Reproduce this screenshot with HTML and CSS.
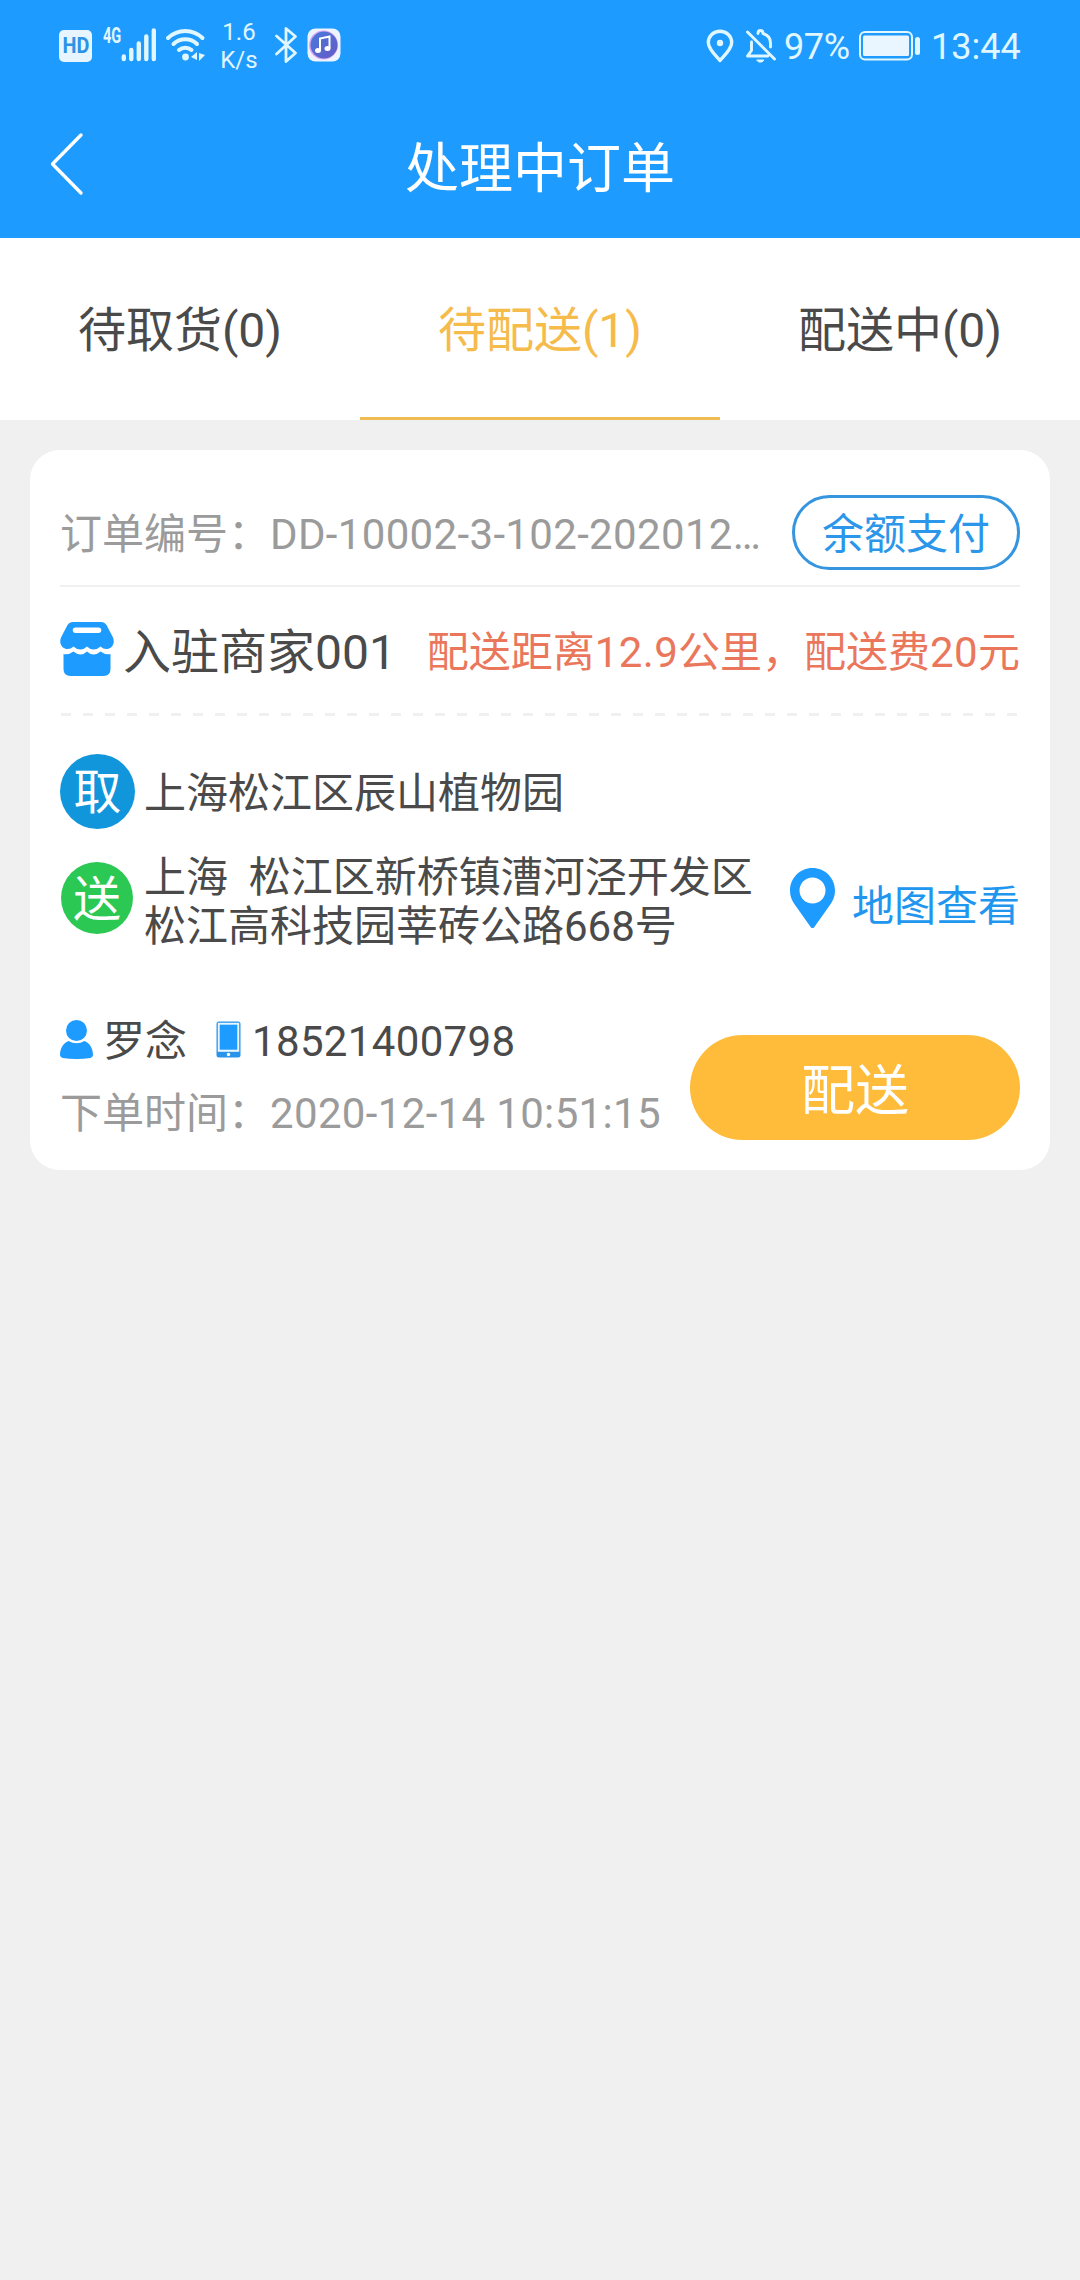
FILE: index.html
```html
<!DOCTYPE html>
<html lang="zh-CN">
<head>
<meta charset="utf-8">
<title>处理中订单</title>
<link rel="stylesheet" href="styles.css">
</head>
<body>
<header class="header">
  <div class="status">
    <span class="hd"><b>HD</b></span>
    <span class="net">4G</span>
    <svg class="signal" width="36" height="34" viewBox="0 0 36 34" stroke="currentColor" stroke-width="4.4" stroke-linecap="round"><path d="M2.8 28.5v2.5M10.3 22v9M17.8 15.500v15.500M25.300 8.500v22.500M32.800 2.500v28.500"/></svg>
    <svg class="wifi" width="42" height="36" viewBox="0 0 42 36" fill="none" stroke="currentColor" stroke-width="4" stroke-linecap="round"><path d="M3 11a24.500 24.500 0 0 1 34.500 0M8.500 17a17 17 0 0 1 23.500 0M14 23a9.500 9.500 0 0 1 12.500 0"/><circle cx="20.500" cy="30" r="3.400" fill="currentColor" stroke="none"/><path d="M26 30l6-5v8zM34 26v8l6-6z" fill="currentColor" stroke="none"/></svg>
    <span class="speed"><span>1.6</span><span>K/s</span></span>
    <svg class="bluetooth" width="24" height="38" viewBox="0 0 24 38" fill="none" stroke="currentColor" stroke-width="2.800" stroke-linejoin="round" stroke-linecap="round"><path d="M2.500 10l19 17L12 35.500V2.500l9.500 8L2.500 28"/></svg>
    <svg class="music" width="34" height="34" viewBox="0 0 34 34"><defs><linearGradient id="disc" x1="0" y1="0" x2="1" y2="1"><stop offset="0" stop-color="#477bdf"/><stop offset="1" stop-color="#6659c4"/></linearGradient></defs><rect x=".5" y=".5" width="33" height="33" rx="8" fill="#eef4ff"/><circle cx="16.500" cy="17" r="14.500" fill="#d9a9ef"/><circle cx="17" cy="17" r="13.500" fill="url(#disc)"/><path d="M13 22V10.500l9.500-2V20" fill="none" stroke="#fff" stroke-width="2"/><ellipse cx="11" cy="22.500" rx="3" ry="2.500" fill="#fff"/><ellipse cx="20.500" cy="20.500" rx="3" ry="2.500" fill="#fff"/></svg>
    <span class="spacer"></span>
    <svg class="gps" width="28" height="34" viewBox="0 0 28 34"><path d="M14 2.200C7.500 2.200 2.300 7 2.300 13.500 2.300 20 10 27 14 31.500 18 27 25.700 20 25.700 13.500 25.700 7 20.500 2.200 14 2.200z" fill="none" stroke="currentColor" stroke-width="3.400" stroke-linejoin="round"/><circle cx="14" cy="14" r="3.200" fill="currentColor"/></svg>
    <svg class="mute" width="32" height="36" viewBox="0 0 32 36" fill="none" stroke="currentColor" stroke-width="2.900" stroke-linecap="round" stroke-linejoin="round"><path d="M2.500 4l27 27M6.500 14v8.500L2.500 28H23M13 5.500C13 1.500 18 1.500 18 5.500 23 7 25.500 10.500 25.500 15v4"/><path d="M12 32h7l-2 2h-3z" fill="currentColor" stroke-width="1"/></svg>
    <span class="percent">97%</span>
    <svg class="battery" width="62" height="30" viewBox="0 0 62 30"><rect x="1" y="1" width="52" height="27.500" rx="5" fill="none" stroke="currentColor" stroke-width="2"/><rect x="4" y="4.500" width="46" height="20.500" rx="1.500" fill="#e9f5ff"/><rect x="56" y="6" width="5" height="18" rx="2.500" fill="currentColor"/></svg>
    <span class="clock">13:44</span>
  </div>
  <div class="navbar">
    <svg class="back" width="36" height="64" viewBox="0 0 36 64" fill="none" stroke="#fff" stroke-width="3.400" stroke-linecap="round" stroke-linejoin="round"><path d="M32 3L3.500 32 32 61"/></svg>
    <h1 class="title">处理中订单</h1>
  </div>
</header>
<nav class="tabs">
  <a class="tab">待取货(0)</a>
  <a class="tab active">待配送(1)</a>
  <a class="tab">配送中(0)</a>
</nav>
<main class="card">
  <div class="order">
    <span class="order-no">订单编号：<span class="digits">DD-10002-3-102-202012…</span></span>
    <span class="pay">余额支付</span>
  </div>
  <div class="shop">
    <svg width="54" height="54" viewBox="0 0 54 54" fill="#1e9bff"><path fill-rule="evenodd" d="M13 0H41Q44.500 0 46.500 3L53 15.500C55 20.500 53 26 47.500 27Q43.500 27.500 40.500 24.500Q37.500 27.500 33.500 27.500Q30 27.500 27 24.500Q24 27.500 20.500 27.500Q16.500 27.500 13.500 24.500Q10.500 27.500 6.500 27C1 26-1 20.500 1 15.500L7.500 3Q9.500 0 13 0zM15.500 5.500a2.700 2.700 0 0 0 0 5.500H38.500a2.700 2.700 0 0 0 0-5.500z"/><path d="M3.500 32Q9 33 13.500 29.500Q17 32.500 20.500 32.500Q24 32.500 27 29.500Q30 32.500 33.500 32.500Q37 32.500 40.500 29.500Q45 33 50.500 32V47Q50.500 54 43.500 54H10.500Q3.500 54 3.500 47z"/></svg>
    <span class="shop-name">入驻商家001</span>
    <span class="fee">配送距离<span class="digits">12.9</span>公里，配送费<span class="digits">20</span>元</span>
  </div>
  <svg class="dashes" width="960" height="3" viewBox="0 0 960 3"><path d="M1 1.500H960" stroke="#f0f0f0" stroke-width="3" stroke-dasharray="10 12"/></svg>
  <div class="route">
    <div class="stops">
      <div class="stop">
        <span class="badge pick">取</span>
        <p class="address">上海松江区辰山植物园</p>
      </div>
      <div class="stop">
        <span class="badge send">送</span>
        <p class="address">上海  松江区新桥镇漕河泾开发区松江高科技园莘砖公路668号</p>
      </div>
    </div>
    <a class="map">
      <svg width="45" height="60" viewBox="0 0 45 60" fill="#1e9bff"><path fill-rule="evenodd" d="M22.500 0C10 0 0 10 0 22.500 0 28 1.500 31.500 4 35.500L21 59.500Q22.500 61 24 59.500L41 35.500C43.500 31.500 45 28 45 22.500 45 10 35 0 22.500 0zM22.500 9.500a13 13 0 1 1 0 26 13 13 0 0 1 0-26z"/></svg>
      <span>地图查看</span>
    </a>
  </div>
  <div class="footer">
    <div class="info">
      <div class="contact">
        <svg class="person" width="33" height="39" viewBox="0 0 33 39" fill="#1e9bff"><circle cx="16.500" cy="10.500" r="10.500"/><path d="M8.500 21Q16.500 25.500 24.500 21C30 23 33 29 33 35Q33 37 30.500 38Q16.500 40 2.500 38Q0 37 0 35C0 29 3 23 8.500 21z"/></svg>
        <span class="name">罗念</span>
        <svg class="phone" width="25" height="37" viewBox="0 0 25 37"><rect x=".5" y=".5" width="24" height="36" rx="2.500" fill="#2a94ea"/><rect x="1.800" y="1.800" width="21.400" height="29" fill="#e8f7ff"/><rect x="3.700" y="3.700" width="17.600" height="25" fill="#1e9bff"/><circle cx="12.500" cy="33.500" r="1.700" fill="#fff"/></svg>
        <span class="digits">18521400798</span>
      </div>
      <div class="time">下单时间：<span class="digits">2020-12-14 10:51:15</span></div>
    </div>
    <button class="deliver">配送</button>
  </div>
</main>
</body>
</html>
```
FILE: styles.css
```css
* { box-sizing: border-box; }
body {
  margin: 0;
  min-height: 2280px;
  background: #f0f0f0;
  color: #4a4a4a;
  font: 42px/50px Roboto, "Noto Sans CJK SC", sans-serif;
}
svg { display: block; flex: none; }
span, a { white-space: nowrap; }
.digits { letter-spacing: .34px; }

.header { height: 238px; background: #1e9bff; }
.status {
  display: flex;
  align-items: flex-start;
  height: 90px;
  padding: 0 60px 0 59px;
  color: #e0f7ff;
}
.hd {
  display: flex;
  justify-content: center;
  width: 33px;
  height: 32px;
  margin-top: 30px;
  border-radius: 5px;
  background: #e6f5ff;
  color: #2c93e6;
  font-size: 22px;
  line-height: 32px;
}
.hd b { transform: scaleX(.9); }
.net {
  width: 18px;
  margin: 26px 0 0 11px;
  font-size: 22px;
  font-weight: 700;
  line-height: 20px;
  transform: scaleX(.66);
  transform-origin: left;
}
.signal { margin: 28px 0 0 0; }
.wifi { margin: 27px 0 0 8px; }
.speed {
  display: flex;
  flex-direction: column;
  width: 40px;
  margin: 18px 0 0 12px;
  font-size: 24px;
  line-height: 28px;
  text-align: center;
}
.bluetooth { margin: 26px 0 0 15px; }
.music { margin: 28px 0 0 9px; }
.spacer { flex: 1; }
.gps { margin-top: 29px; }
.mute { margin: 28px 1px 0 11px; }
.percent, .clock { margin-top: 27px; font-size: 36px; line-height: 40px; }
.percent { width: 66px; margin-left: 6px; letter-spacing: -.4px; }
.battery { margin: 31px 0 0 9px; }
.clock { width: 89px; margin-left: 10px; }

.navbar {
  display: grid;
  grid-template-columns: 36px 1fr 36px;
  align-items: center;
  height: 148px;
  padding: 0 49px;
}
.title {
  margin: 11px 0 0;
  color: #fff;
  font-size: 54px;
  font-weight: 400;
  line-height: 64px;
  text-align: center;
}

.tabs {
  display: grid;
  grid-template-columns: repeat(3, 1fr);
  height: 182px;
  background: #fff;
}
.tab {
  height: 182px;
  padding-top: 6px;
  border-bottom: 3px solid transparent;
  font-size: 48px;
  line-height: 174px;
  text-align: center;
}
.active { border-color: #f0bd55; color: #f5bb4b; }

.card {
  height: 720px;
  margin: 30px;
  padding: 45px 30px 30px;
  border-radius: 30px;
  background: #fff;
}
.order {
  display: flex;
  justify-content: space-between;
  height: 92px;
  border-bottom: 2px solid #f0f0f0;
}
.order-no { color: #9b9b9b; line-height: 80px; }
.pay {
  width: 228px;
  height: 75px;
  border: 3px solid #3595df;
  border-radius: 38px;
  color: #2b96ea;
  line-height: 74px;
  text-align: center;
}
.shop {
  display: flex;
  align-items: center;
  height: 126px;
}
.shop svg { margin-top: -2px; }
.shop-name { margin: 5px 0 0 9px; font-size: 48px; }
.fee { margin: 5px 0 0 auto; color: #ea775b; }

.route {
  display: flex;
  justify-content: space-between;
  padding-top: 38px;
}
.stops { display: grid; row-gap: 21px; }
.stop { display: flex; align-items: center; min-height: 75px; }
.badge {
  width: 75px;
  height: 75px;
  border-radius: 50%;
  color: #fff;
  font-size: 48px;
  line-height: 78px;
  text-align: center;
}
.pick { background: #1296db; }
.send {
  width: 72px;
  height: 72px;
  margin: 0 2px 6px 1px;
  background: #2bc853;
  line-height: 75px;
}
.address {
  width: 610px;
  margin: 3px 0 0 9px;
  line-height: 49px;
  white-space: pre-wrap;
}
.map {
  display: flex;
  padding-top: 114px;
  color: #2196ef;
}
.map span { margin: 14px 0 0 17px; }

.footer {
  display: flex;
  justify-content: space-between;
  padding-top: 66px;
}
.contact { display: flex; align-items: flex-start; height: 72px; }
.person { margin-top: 3px; }
.name { margin-left: 10px; }
.phone { margin: 4px 11px 0 29px; }
.time { color: #9b9b9b; }
.deliver {
  width: 330px;
  height: 105px;
  margin-top: 18px;
  padding: 8px 0 0;
  border: 0;
  border-radius: 53px;
  background: #ffbc3b;
  color: #fff;
  font: 54px/64px Roboto, "Noto Sans CJK SC", sans-serif;
}
```
